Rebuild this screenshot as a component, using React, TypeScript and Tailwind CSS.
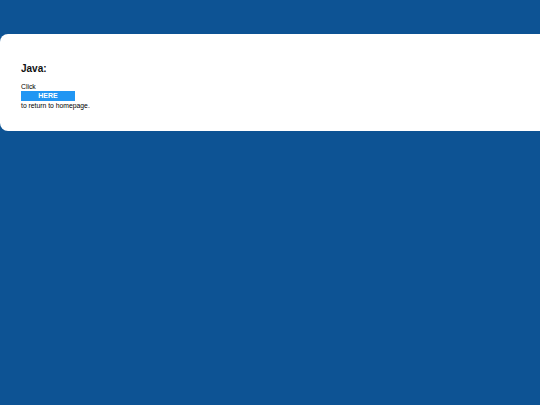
import React from 'react';

const App = () => {
  return (
    <div
      className="min-h-screen w-full overflow-hidden bg-[#0d5394] pt-[34px]"
      style={{ fontFamily: '"Liberation Sans", Arial, sans-serif' }}
    >
      <div className="w-full rounded-l-[8px] bg-white pt-[29px] pb-[21px] pl-[21px]">
        <h2 className="text-[10px] leading-[12px] font-bold text-[#111]">Java:</h2>
        <p className="mt-[7.5px] text-[6.8px] leading-[8px] text-black">Click</p>
        <button className="mt-[0.5px] block h-[10px] w-[54px] bg-[#2196f3] text-[7px] leading-[10px] font-bold text-white">
          HERE
        </button>
        <p className="mt-[0.5px] text-[6.8px] leading-[8px] text-black">to return to homepage.</p>
      </div>
    </div>
  );
};

export default App;
